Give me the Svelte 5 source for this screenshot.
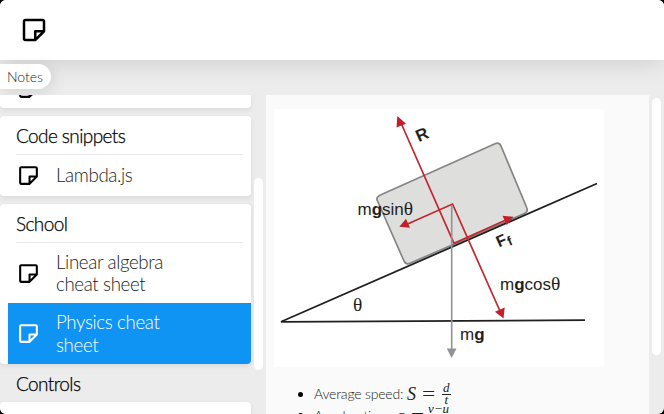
<script>
  const sections = [
    { title: 'Code snippets', notes: [{ name: 'Lambda.js' }] },
    { title: 'School', notes: [{ name: 'Linear algebra cheat sheet' }, { name: 'Physics cheat sheet', active: true }] },
  ];
</script>

{#snippet noteIcon(size)}
  <svg class="icon" width={size} height={size} viewBox="0 0 24 24" fill="currentColor">
    <path d="M19 3H5c-1.103 0-2 .897-2 2v14c0 1.103.897 2 2 2h8a.996.996 0 0 0 .707-.293l7-7a.997.997 0 0 0 .196-.293c.014-.03.022-.061.033-.093a.991.991 0 0 0 .051-.259c.002-.021.013-.041.013-.062V5c0-1.103-.897-2-2-2zM5 5h14v7h-6a1 1 0 0 0-1 1v6H5V5zm9 12.586V14h3.586L14 17.586z" />
  </svg>
{/snippet}

<div class="window">
  <header>{@render noteIcon(30)}</header>
  <div class="tabs"><span class="tab">Notes</span></div>
  <main>
    <nav>
      <section class="card previous">
        <div class="cut">{@render noteIcon(25)}</div>
      </section>
      {#each sections as section}
        <section class="card">
          <h2>{section.title}</h2>
          {#each section.notes as note}
            <div class="note" class:active={note.active}>
              {@render noteIcon(25)}
              <span>{note.name}</span>
            </div>
          {/each}
        </section>
      {/each}
      <h2 class="loose">Controls</h2>
      <section class="card last"></section>
    </nav>
    <div class="rail left"><i></i></div>
    <article>
      <svg class="diagram" width="330" height="258" viewBox="274 109 330 258">
        <rect x="274" y="109" width="330" height="258" fill="#fff" />
        <path d="M381.500 194.500L495 143.700Q499 142 501 146L526.700 207.500Q528.500 211.500 524.500 213.500L410 263.300Q406 265 404 261L377.300 200.500Q375.500 197 381.500 194.500Z" fill="#dededd" stroke="#858585" stroke-width="1.7" />
        <path d="M597 183.500L281 321.800L585 320.200" fill="none" stroke="#231f20" stroke-width="1.8" />
        <g fill="none" stroke="#c1272d" stroke-width="1.7">
          <path d="M401 123L454 243.300L507 219.500" />
          <path d="M407 224.300L452.500 204L499.500 310" />
        </g>
        <path d="M451.700 205V350" stroke="#929292" stroke-width="1.6" />
        <path d="M446.800 348.500H456.500L451.600 358Z" fill="#929292" />
        <g fill="#c1202b">
          <path d="M397.300 116L406 123.800L396.500 127.500Z" />
          <path d="M399.300 226.800L406 218.700L410 227.800Z" />
          <path d="M513.500 216.700L502.500 215.700L506.700 225Z" />
          <path d="M503.500 318.500L504.700 307.500L495 311.700Z" />
        </g>
        <g class="label">
          <text x="357.500" y="215">m<tspan class="b">g</tspan>sin<tspan class="s">θ</tspan></text>
          <text x="500" y="290">m<tspan class="b">g</tspan>cos<tspan class="s">θ</tspan></text>
          <text x="460" y="340">m<tspan class="b">g</tspan></text>
          <text x="353" y="311" class="s">θ</text>
          <text class="b" transform="translate(418.800 142.200) rotate(-24)">R</text>
          <text class="b" transform="translate(499 247.500) rotate(-24)" font-size="16">F<tspan class="sub" dx="0.500" dy="3">f</tspan></text>
        </g>
      </svg>
      <ul>
        <li>
          <span class="term">Average speed:</span>
          <span class="math">S</span><span class="eq">=</span>
          <span class="frac"><span>d</span><span>t</span></span>
        </li>
        <li class="second">
          <span class="term">Acceleration:</span>
          <span class="math">a</span><span class="eq">=</span>
          <span class="frac"><span>v−u</span><span>t</span></span>
        </li>
      </ul>
    </article>
    <div class="rail right"><i></i></div>
  </main>
</div>

<style>
  :global(body) { margin: 0; background: #000; }
  .window {
    width: 664px; height: 414px; overflow: hidden; border-radius: 6px;
    display: flex; flex-direction: column; background: #ececec;
    font-family: Lato, sans-serif; font-weight: 300; color: #000;
  }
  header {
    flex: 0 0 60px; box-sizing: border-box; padding: 15px 19px;
    background: #fff; box-shadow: 0 0 26px rgba(0, 0, 0, .16);
  }
  .icon { display: block; flex: none; }
  .tabs { flex: 0 0 31px; padding-top: 4px; display: flex; align-items: flex-start; position: relative; }
  .tab {
    box-sizing: border-box; width: 51px; height: 25px; padding-left: 7px;
    border-radius: 0 13px 13px 0; background: #fff; line-height: 26px; font-size: 14px;
    color: #222; box-shadow: 3px 3px 14px rgba(0, 0, 0, .1);
  }
  main { display: flex; flex: 0 0 319px; height: 319px; overflow: hidden; position: relative; }
  nav { width: 251px; flex: none; }
  .card {
    background: #fff; border-radius: 4px; margin-bottom: 8px; overflow: hidden;
    box-shadow: 0 2px 5px rgba(0, 0, 0, .08);
  }
  .previous { height: 13px; border-radius: 0 0 4px 4px; }
  .cut { padding-left: 16px; margin-top: -19px; }
  h2 {
    margin: 0 8px 0 16px; height: 38px; line-height: 39px; border-bottom: 1px solid #e8e8e8;
    font-size: 19px; font-weight: 300; letter-spacing: -.6px; white-space: nowrap;
    -webkit-text-stroke: .25px currentColor;
  }
  .note {
    margin-left: 8px; padding: 8px; display: flex; align-items: center;
    font-size: 18.7px; line-height: 22.2px; letter-spacing: -.36px;
  }
  .note span { margin-left: 15px; width: 125px; color: #222; }
  .active { background: #1094f4; color: #fff; }
  .active span { color: #fff; }
  .loose { height: 30px; line-height: 24px; border: 0; }
  .last { height: 40px; }
  .rail { width: 9px; flex: none; }
  .rail i { display: block; border-radius: 4.5px; background: #fff; }
  .left { margin: 0 3px; }
  .left i { margin-top: 83px; height: 192px; }
  article { flex: 0 0 383px; overflow: hidden; background: #fafafa; box-sizing: border-box; padding: 14px 8px; }
  .diagram { display: block; }
  .right { margin-left: 3px; }
  .right i { margin-top: 3px; height: 257px; }
  .label { font-family: "Liberation Sans", Arial, sans-serif; font-size: 17px; fill: #231f20; }
  .b { font-weight: 700; }
  .sub { font-size: 13px; }
  .s { font-family: "Liberation Serif", serif; font-size: 19.5px; }
  ul { margin: 16px 0 0; padding: 0; list-style: none; font-size: 14px; }
  li { display: flex; align-items: center; height: 22px; padding-left: 24px; white-space: nowrap; }
  li::before { content: ''; width: 5px; height: 5px; border-radius: 50%; background: #000; margin-right: 11px; }
  .term { width: 93px; letter-spacing: -.2px; line-height: 16px; color: #222; }
  .math, .eq, .frac { font-family: "Liberation Serif", serif; font-weight: 400; color: #222; }
  .math { font-style: italic; font-size: 18px; width: 15px; line-height: 18px; }
  .eq { font-size: 18px; width: 19px; line-height: 18px; transform: scaleX(1.3); transform-origin: left; }
  .frac { display: flex; flex-direction: column; align-items: center; font-style: italic; font-size: 13px; line-height: 10px; margin-left: 1px; }
  .frac span { padding: 0 1px 1px; }
  .frac span:first-child { border-bottom: 1px solid #222; }
  .second { height: 21px; }
  .second .term { width: 82px; }
  .second .frac { margin-left: -3px; }
</style>
